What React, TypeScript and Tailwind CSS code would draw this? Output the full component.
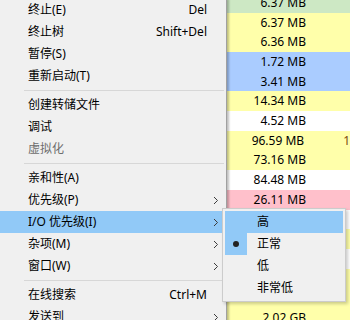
import React from 'react';

type MenuItem =
  | { sep: true }
  | { sep?: false; label: string; shortcut?: string; sub?: boolean; disabled?: boolean; active?: boolean };

const menuItems: MenuItem[] = [
  { label: '终止(E)', shortcut: 'Del' },
  { label: '终止树', shortcut: 'Shift+Del' },
  { label: '暂停(S)' },
  { label: '重新启动(T)' },
  { sep: true },
  { label: '创建转储文件' },
  { label: '调试' },
  { label: '虚拟化', disabled: true },
  { sep: true },
  { label: '亲和性(A)' },
  { label: '优先级(P)', sub: true },
  { label: 'I/O 优先级(I)', sub: true, active: true },
  { label: '杂项(M)', sub: true },
  { label: '窗口(W)', sub: true },
  { sep: true },
  { label: '在线搜索', shortcut: 'Ctrl+M' },
  { label: '发送到', sub: true },
];

const rows = [
  { bg: 'bg-[#cde8c4]', val: '6.37 MB' },
  { bg: 'bg-[#ffffaa]', val: '6.37 MB' },
  { bg: 'bg-[#ffffaa]', val: '6.36 MB' },
  { bg: 'bg-[#aaccff]', val: '1.72 MB' },
  { bg: 'bg-[#aaccff]', val: '3.41 MB' },
  { bg: 'bg-[#ffffaa]', val: '14.34 MB' },
  { bg: 'bg-white', val: '4.52 MB' },
  { bg: 'bg-[#ffffaa]', val: '96.59 MB', extra: '1' },
  { bg: 'bg-[#ffffaa]', val: '73.16 MB' },
  { bg: 'bg-white', val: '84.48 MB' },
  { bg: 'bg-[#ffc0cb]', val: '26.11 MB' },
  { bg: 'bg-white', val: '' },
  { bg: 'bg-[#ffffaa]', val: '' },
  { bg: 'bg-white', val: '' },
  { bg: 'bg-[#ffffaa]', val: '' },
  { bg: 'bg-[#ffffaa]', val: '7.47 MB' },
  { bg: 'bg-[#ffffaa]', val: '2.02 GB' },
];

const font = { fontFamily: '"Noto Sans", "Noto Sans CJK SC", sans-serif' };

const Chevron: React.FC = () => (
  <svg width="6" height="9" viewBox="0 0 6 9">
    <path d="M1 1 L4.5 4.5 L1 8" fill="none" stroke="#3c3c3c" strokeWidth="1" />
  </svg>
);

const App: React.FC = () => {
  return (
    <div className="relative w-[350px] h-[320px] overflow-hidden bg-white text-[12px] text-black" style={font}>
      <div className="mt-[-7px]">
        {rows.map((r, i) => (
          <div key={i} className={`flex h-[19.7px] items-center ${r.bg}`}>
            <div className="w-[306px] text-right leading-none">{r.val}</div>
            <div className="pl-[39px] leading-none text-[#7a4a10]">{r.extra}</div>
          </div>
        ))}
      </div>

      <div className="absolute left-0 top-[-1px] w-[227px] bg-[#f0f0f0] border-r border-[#a0a0a0] shadow-[2px_0_2px_rgba(0,0,0,0.25)]">
        {menuItems.map((m, i) =>
          m.sep ? (
            <div key={i} className="h-[7px] flex items-center pl-[24px] pr-[2px]">
              <div className="h-px w-full bg-[#d7d7d7]" />
            </div>
          ) : (
            <div
              key={i}
              className={`h-[22px] flex items-center pl-[28px] pr-[2px] leading-none ${m.active ? 'bg-[#91c9f7]' : ''} ${m.disabled ? 'text-[#6d6d6d]' : ''}`}
            >
              <span className="flex-1">{m.label}</span>
              {m.shortcut && <span>{m.shortcut}</span>}
              <span className="w-[17px] flex justify-center">{m.sub && <Chevron />}</span>
            </div>
          )
        )}
      </div>

      <div className="absolute left-[222px] top-[208px] w-[124px] bg-[#f0f0f0] border border-[#cccccc] p-[2px] shadow-[2px_2px_3px_rgba(0,0,0,0.2)]">
        <div className="h-[22px] flex items-center leading-none bg-[#91c9f7]">
          <span className="w-[22px]" />
          <span className="ml-[10px]">高</span>
        </div>
        <div className="h-[22px] flex items-center leading-none">
          <span className="w-[22px] h-[22px] bg-[#91c9f7] flex items-center justify-center">
            <span className="w-[6px] h-[6px] rounded-full bg-[#222]" />
          </span>
          <span className="ml-[10px]">正常</span>
        </div>
        <div className="h-[22px] flex items-center leading-none">
          <span className="w-[22px]" />
          <span className="ml-[10px]">低</span>
        </div>
        <div className="h-[22px] flex items-center leading-none">
          <span className="w-[22px]" />
          <span className="ml-[10px]">非常低</span>
        </div>
      </div>
    </div>
  );
};

export default App;
